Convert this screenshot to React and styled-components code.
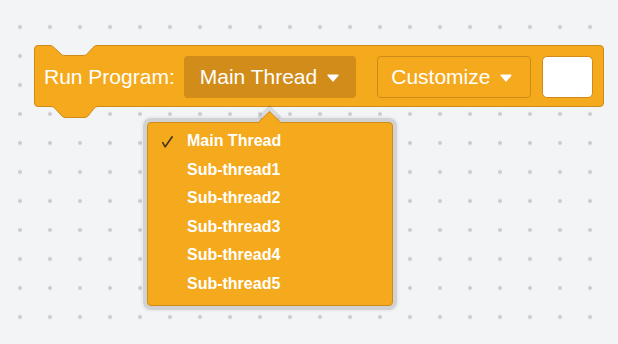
import React from "react";
import styled, { createGlobalStyle } from "styled-components";

const ORANGE = "#f5a91c";
const DARK = "#cf8b17";
const FIELD = "#d28c19";
const BG = "#f3f4f6";

const Global = createGlobalStyle`
  html, body { margin: 0; padding: 0; }
  body { background: ${BG}; font-family: "Liberation Sans", Arial, sans-serif; }
`;

const Workspace = styled.div`
  box-sizing: border-box;
  width: 618px;
  height: 344px;
  overflow: hidden;
  padding: 45px 0 0 34px;
  background-color: ${BG};
  background-image: radial-gradient(circle, #cbcbcf 0 1.6px, transparent 2.3px);
  background-size: 30px 29px;
  background-position: 5px 12.5px;
`;

const Block = styled.div`
  position: relative;
  display: inline-flex;
  align-items: flex-start;
  box-sizing: border-box;
  height: 62px;
  padding: 10px 10px 0 9px;
  background: ${ORANGE};
  border: 1px solid ${DARK};
  border-radius: 4px;
  color: #fff;
  font-family: "Liberation Sans", Arial, sans-serif;
  font-size: 21px;
`;

const Notch = styled.svg`
  position: absolute;
  left: 14px;
  top: -1px;
  width: 48px;
  height: 12px;
  overflow: visible;
`;

const Tab = styled.svg`
  position: absolute;
  left: 15px;
  bottom: -13px;
  width: 48px;
  height: 13px;
  overflow: visible;
`;

const Label = styled.span`
  line-height: 42px;
  white-space: nowrap;
  margin-right: 9px;
`;

const Field = styled.div`
  position: relative;
  display: flex;
  align-items: center;
  box-sizing: border-box;
  height: 42px;
  gap: 10px;
  white-space: nowrap;
  border-radius: 4px;
  margin-right: ${(p) => p.$mr}px;
  padding: ${(p) => (p.$outlined ? "0 18px 0 13px" : "0 17px 0 16px")};
  background: ${(p) => (p.$outlined ? "transparent" : FIELD)};
  border: ${(p) => (p.$outlined ? `1px solid ${DARK}` : "none")};
`;

const Caret = styled.svg`
  width: 12px;
  height: 8px;
  margin-top: 2px;
  flex: none;
`;

const ColorBox = styled.div`
  box-sizing: border-box;
  width: 51px;
  height: 42px;
  background: #fff;
  border: 1px solid ${DARK};
  border-radius: 5px;
`;

const Menu = styled.div`
  position: absolute;
  top: calc(100% + 24px);
  left: 50%;
  transform: translateX(-50%);
  width: 246px;
  z-index: 2;
`;

const MenuBody = styled.ul`
  list-style: none;
  margin: 0;
  box-sizing: border-box;
  padding: 4px 0 6px;
  background: ${ORANGE};
  border: 1px solid ${DARK};
  border-radius: 4px;
  box-shadow: 0 0 0 4px rgba(0, 0, 0, 0.1), 0 0 2px 6px rgba(0, 0, 0, 0.04);
`;

const Arrow = styled.div`
  position: absolute;
  top: -8.5px;
  left: calc(50% - 8.5px);
  width: 17px;
  height: 17px;
  box-sizing: border-box;
  background: ${ORANGE};
  border-top: 1px solid ${DARK};
  border-left: 1px solid ${DARK};
  border-top-left-radius: 2px;
  transform: rotate(45deg);
  box-shadow: -4px -4px 0 0 rgba(0, 0, 0, 0.1);
`;

const Item = styled.li`
  display: flex;
  align-items: center;
  height: 28.6px;
  padding-left: 14px;
  color: #fff;
  font-family: "Liberation Sans", Arial, sans-serif;
  font-weight: bold;
  font-size: 16px;
  line-height: 28.6px;
  white-space: nowrap;
`;

const CheckSlot = styled.span`
  display: flex;
  width: 11px;
  height: 12px;
  margin-right: 14px;
  margin-top: 2px;
  flex: none;
`;

const caret = (
  <Caret viewBox="0 0 12 8">
    <path
      d="M1.2 1.2 H10.8 L6 6.8 Z"
      fill="#fff"
      stroke="#fff"
      strokeWidth="1.6"
      strokeLinejoin="round"
    />
  </Caret>
);

const threads = ["Main Thread", "Sub-thread1", "Sub-thread2", "Sub-thread3", "Sub-thread4", "Sub-thread5"];

const edge =
  "M0 0.5 H1 C3 0.5 4 1.5 5 2.5 L12 9 C13 10 14 10.5 16 10.5 H34 C36 10.5 37 10 38 9 L44 2.5 C45 1.5 46 0.5 48 0.5";
const tabEdge =
  "M0 0.5 H1 C3 0.5 4 1.5 5 2.5 L12 10 C13 11 14 11.5 16 11.5 H34 C36 11.5 37 11 38 10 L44 2.5 C45 1.5 46 0.5 48 0.5";

export default function App() {
  return (
    <>
      <Global />
      <Workspace>
        <Block>
          <Notch viewBox="0 0 48 12">
            <path d={`${edge} V-0.5 H0 Z`} fill={BG} />
            <path d={edge} fill="none" stroke={DARK} strokeWidth="1" />
          </Notch>
          <Tab viewBox="0 0 48 13">
            <path d={`${tabEdge} V-1.5 H0 Z`} fill={ORANGE} />
            <path d={tabEdge} fill="none" stroke={DARK} strokeWidth="1" />
          </Tab>
          <Label>Run Program:</Label>
          <Field $mr={21}>
            <span>Main Thread</span>
            {caret}
            <Menu>
              <MenuBody>
                {threads.map((t, i) => (
                  <Item key={t}>
                    <CheckSlot>
                      {i === 0 && (
                        <svg width="11" height="12" viewBox="0 0 11 12">
                          <path
                            d="M0.8 6.6 L3.2 10.8 L10.2 0.8"
                            fill="none"
                            stroke="#3b3120"
                            strokeWidth="1.5"
                            strokeLinecap="round"
                            strokeLinejoin="round"
                          />
                        </svg>
                      )}
                    </CheckSlot>
                    {t}
                  </Item>
                ))}
              </MenuBody>
              <Arrow />
            </Menu>
          </Field>
          <Field $outlined $mr={11}>
            <span>Customize</span>
            {caret}
          </Field>
          <ColorBox />
        </Block>
      </Workspace>
    </>
  );
}
